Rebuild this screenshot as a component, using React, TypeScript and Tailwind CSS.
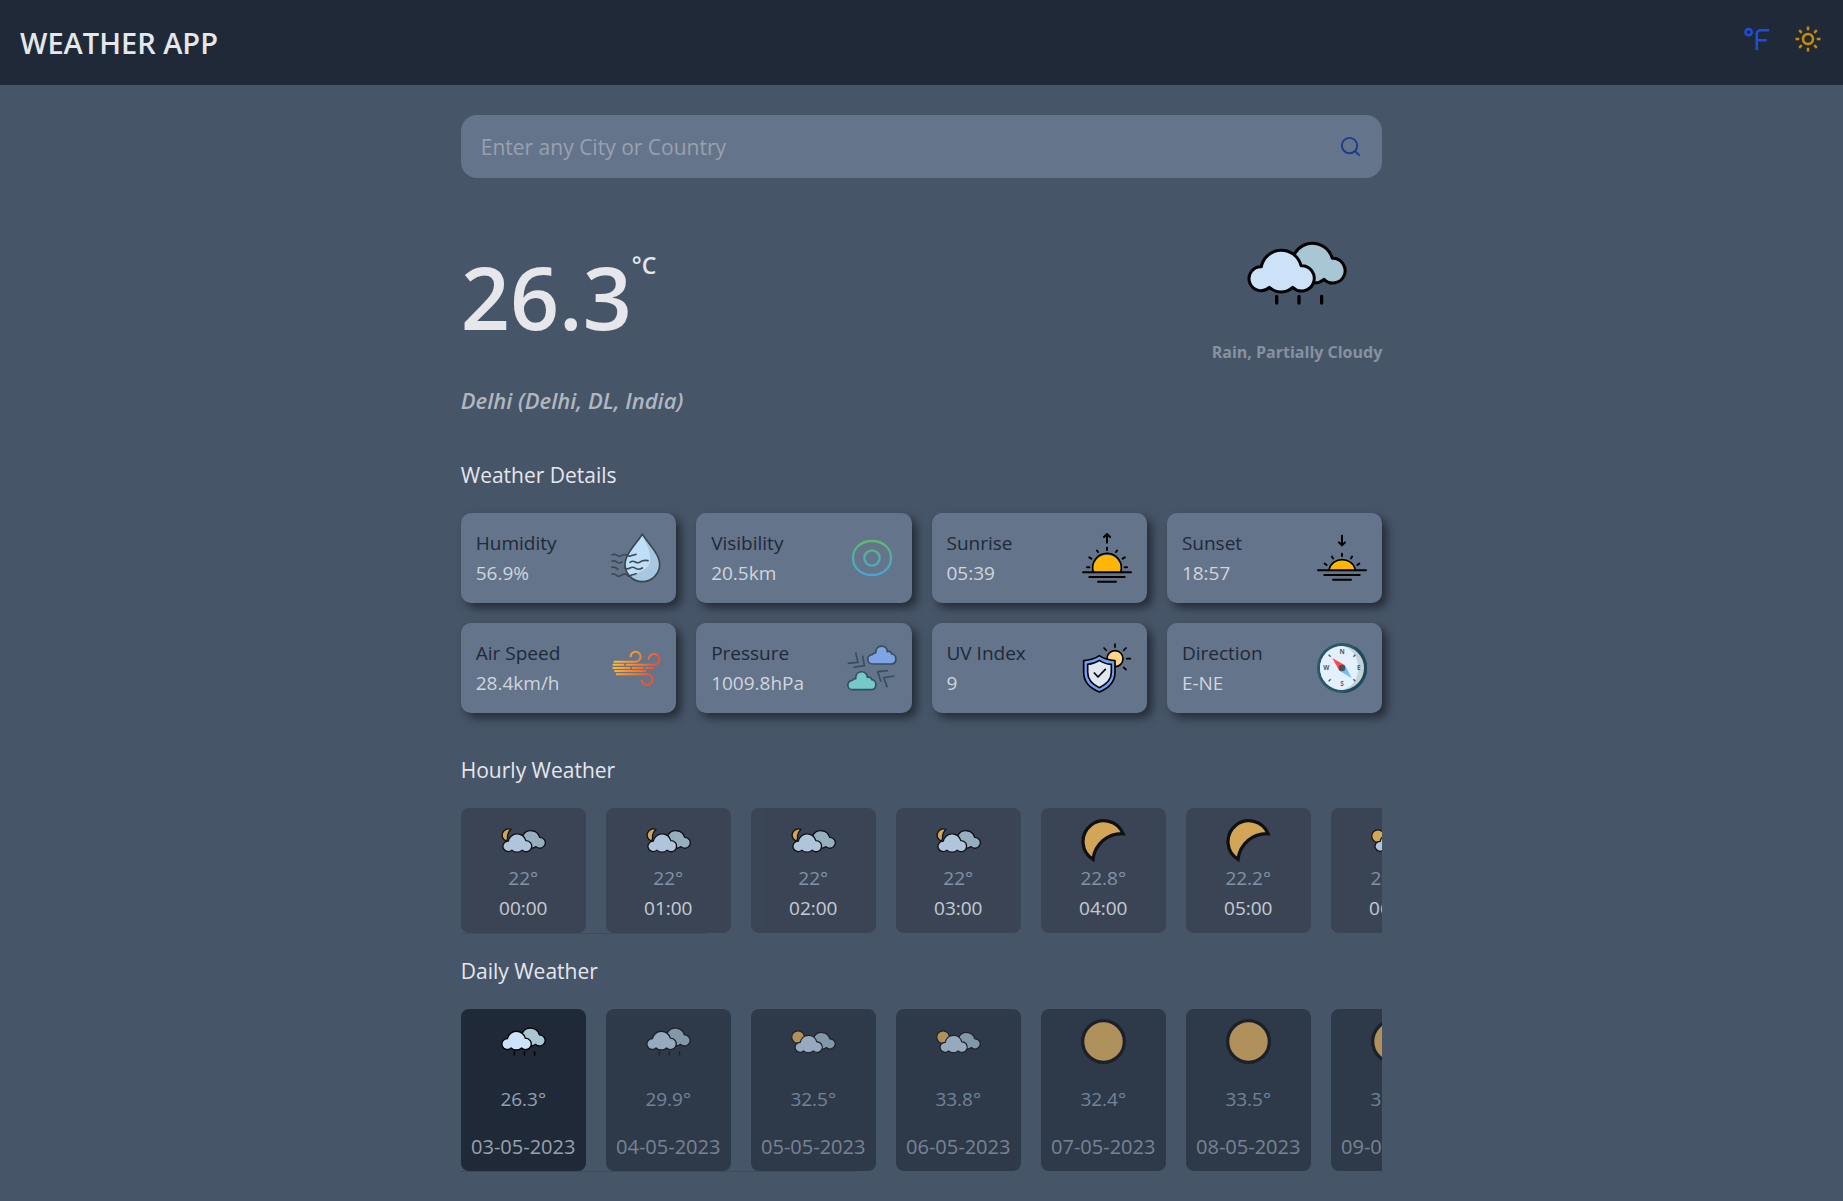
import type { ReactNode } from "react";
import { BiSun } from "react-icons/bi";
import { FiSearch } from "react-icons/fi";
import { RiFahrenheitLine } from "react-icons/ri";

const FRONT_CLOUD =
  "M98 128A36 36 0 1 0 122 190A51 51 0 0 0 192 190A38 38 0 1 0 217 125A61 61 0 0 0 98 128Z";
const BACK_CLOUD =
  "M197 90A62 62 0 0 1 311 103A37 37 0 1 1 286 166A45 45 0 0 1 258 177L180 150Z";

function Clouds({ transform }: { transform: string }) {
  return (
    <g transform={transform} stroke="#000" strokeWidth="9" strokeLinejoin="round">
      <path d={BACK_CLOUD} fill="#a9c6d4" />
      <path d={FRONT_CLOUD} fill="#cbe2f8" />
    </g>
  );
}

type Sky = "rain" | "moonCloud" | "sunCloud" | "moon" | "sun";

function SkyIcon({ kind, className }: { kind: Sky; className: string }) {
  return (
    <svg viewBox="0 0 300 300" className={className} aria-hidden="true">
      {kind === "rain" && (
        <>
          <Clouds transform="translate(-55 3)" />
          <path
            d="M89 220v20M156 220v20M224 220v20"
            stroke="#000"
            strokeWidth="10"
            strokeLinecap="round"
          />
        </>
      )}
      {kind === "moonCloud" && (
        <>
          <path
            d="M66 76A41 41 0 1 0 33 153C50 145 42 135 44 118C46 98 54 86 66 76Z"
            fill="#f7ba52"
            stroke="#000"
            strokeWidth="9"
            strokeLinejoin="round"
          />
          <Clouds transform="translate(-47 28) scale(.98)" />
        </>
      )}
      {kind === "sunCloud" && (
        <>
          <circle cx="47" cy="121" r="42" fill="#f7ba52" stroke="#000" strokeWidth="8" />
          <Clouds transform="translate(-30 36) scale(.93)" />
        </>
      )}
      {kind === "moon" && (
        <path
          d="M80 276A139 139 0 1 1 281 105A193 193 0 0 0 80 276Z"
          fill="#f7ba52"
          stroke="#000"
          strokeWidth="22"
        />
      )}
      {kind === "sun" && (
        <circle cx="150" cy="150" r="139" fill="#f7ba52" stroke="#000" strokeWidth="22" />
      )}
    </svg>
  );
}

function DetailSvg({ children }: { children: ReactNode }) {
  return (
    <svg viewBox="0 0 150 150" className="size-[50px] shrink-0" fill="none" aria-hidden="true">
      {children}
    </svg>
  );
}

const humidityIcon = (
  <DetailSvg>
    <path
      d="M94 3C80 28 42 62 42 94A52 52 0 0 0 146 94C146 62 108 28 94 3Z"
      fill="#bfdff9"
    />
    <path
      d="M94 3C104 34 118 50 118 80C118 104 90 118 56 128A52 52 0 0 0 146 94C146 62 108 28 94 3Z"
      fill="#a9c7e1"
    />
    <path
      d="M94 3C80 28 42 62 42 94A52 52 0 0 0 146 94C146 62 108 28 94 3Z"
      stroke="#37474f"
      strokeWidth="5"
      strokeLinejoin="round"
    />
    <g stroke="#3f4b53" strokeWidth="5" strokeLinecap="round">
      <path d="M3 66q8-4 15 1t15 0t15 0t15 0q7 0 12-3" />
      <path d="M3 85q8-4 14 2t16 0" />
      <path d="M57 88q8-6 16-1t16-1t22-3" />
      <path d="M3 103q10-2 18 6M40 105q9 5 17 0t17 1t20-1" />
      <path d="M3 123q8-2 14 4t16-1t15 0t14 0q6-1 13-4" />
    </g>
  </DetailSvg>
);

const visibilityIcon = (
  <DetailSvg>
    <defs>
      <linearGradient id="visibility" x1="0" y1="20" x2="0" y2="130" gradientUnits="userSpaceOnUse">
        <stop stopColor="#5fb86a" />
        <stop offset="1" stopColor="#46a5dc" />
      </linearGradient>
    </defs>
    <g stroke="url(#visibility)" strokeWidth="7">
      <path d="M75 24C110 24 132 47 132 75S110 126 75 126S18 103 18 75S40 24 75 24Z" />
      <circle cx="75" cy="75" r="23" />
    </g>
  </DetailSvg>
);

const sunriseIcon = (
  <DetailSvg>
    <path d="M34 117A42 42 0 1 1 116 117Z" fill="#ffb703" />
    <g stroke="#000" strokeWidth="6" strokeLinecap="round" strokeLinejoin="round">
      <path d="M34 117A43 43 0 1 1 116 117" strokeWidth="5" />
      <path d="M3 118H147M22 132H128M48 146H102" />
      <path d="M75 4V29M66 12L75 3L84 12M75 44V51M45 53L48 57M105 53L102 57M22 73L28 77M128 73L122 77M15 103H22M128 103H135" />
    </g>
  </DetailSvg>
);

const sunsetIcon = (
  <DetailSvg>
    <path d="M36 111C45 68 105 68 115 111Z" fill="#ffb703" />
    <g stroke="#000" strokeWidth="6" strokeLinecap="round" strokeLinejoin="round">
      <path d="M36 110C46 70 105 70 115 110" strokeWidth="5" />
      <path d="M3 112H147M22 126H128M48 140H102" />
      <path d="M75 8V36M66 28L75 37L84 28M75 62V69M45 71L48 76M105 71L102 76M23 92L29 96M127 92L121 96" />
    </g>
  </DetailSvg>
);

const airIcon = (
  <DetailSvg>
    <defs>
      <linearGradient id="wind" x1="5" y1="20" x2="125" y2="80" gradientUnits="userSpaceOnUse">
        <stop stopColor="#fbd03f" />
        <stop offset="1" stopColor="#f0532d" />
      </linearGradient>
    </defs>
    <g stroke="url(#wind)" strokeWidth="6">
      <path d="M8 56H74A15 15 0 1 0 59 43" />
      <path d="M5 65H40M45 65H126A16 16 0 1 0 113 50" />
      <path d="M5 75H58M63 75H98M103 75H130" />
      <path d="M10 84H105" />
      <path d="M15 94H106A16 16 0 1 1 92 110" />
    </g>
  </DetailSvg>
);

const pressureIcon = (
  <DetailSvg>
    <g stroke="#35505b" strokeWidth="5" strokeLinejoin="round">
      <path
        d="M77 63A14 14 0 0 1 76 35C78 31 82 30 86 30C86 2 121 4 121 26C128 24 133 27 134 33C151 34 151 63 133 63Z"
        fill="#7fa4e6"
      />
      <path
        d="M17 140A14 14 0 0 1 16 112C18 108 22 107 26 107C26 79 61 81 61 103C68 101 73 104 74 110C91 111 91 140 73 140Z"
        fill="#74caca"
      />
      <path d="M2 61L33 58L26 28M19 73L52 68L47 38M123 83L92 86L102 116M143 99L110 104L121 133" />
    </g>
  </DetailSvg>
);

const uvIcon = (
  <DetailSvg>
    <circle cx="99" cy="47" r="24" fill="#ffd688" stroke="#000" strokeWidth="5" />
    <path
      d="M52 38C66 48 82 52 99 53V88C99 118 80 136 52 147C24 136 5 118 5 88V53C22 52 38 48 52 38Z"
      fill="#6ea2f8"
      stroke="#000"
      strokeWidth="5"
      strokeLinejoin="round"
    />
    <path
      d="M52 52C62 59 74 63 88 64V88C88 110 74 124 52 134C30 124 17 110 17 88V64C30 63 42 59 52 52Z"
      fill="#e0e7f1"
      stroke="#000"
      strokeWidth="5"
      strokeLinejoin="round"
    />
    <path
      d="M37 90L48 102L70 79M99 3V13M66 15L73 22M132 15L125 22M134 47H145M132 80L125 73"
      stroke="#000"
      strokeWidth="5"
      strokeLinecap="round"
      strokeLinejoin="round"
    />
  </DetailSvg>
);

const compassIcon = (
  <DetailSvg>
    <circle cx="75" cy="75" r="75" fill="#2b5769" />
    <path d="M113 10A75 75 0 0 1 75 150C120 138 140 60 113 10Z" fill="#1f4a59" />
    <circle cx="75" cy="75" r="66" fill="#c4d3da" />
    <path d="M75 9A66 66 0 0 0 75 141C140 128 140 22 75 9Z" fill="#e4f0fd" />
    <g
      fill="#44606e"
      fontFamily="'Open Sans', sans-serif"
      fontSize="19"
      fontWeight="700"
      textAnchor="middle"
    >
      <text x="75" y="32">N</text>
      <text x="28" y="81">W</text>
      <text x="125" y="81">E</text>
      <text x="75" y="130">S</text>
    </g>
    <path
      d="M35 35L41 41M115 35L109 41M35 115L41 109M115 115L109 109"
      stroke="#44606e"
      strokeWidth="4"
    />
    <path d="M46 45L84 67L67 83Z" fill="#fb4a4f" />
    <path d="M104 105L67 83L84 67Z" fill="#6fbdfb" />
    <circle cx="75" cy="75" r="10" fill="#4a5058" />
  </DetailSvg>
);

const details: { label: string; value: string; icon: ReactNode }[] = [
  { label: "Humidity", value: "56.9%", icon: humidityIcon },
  { label: "Visibility", value: "20.5km", icon: visibilityIcon },
  { label: "Sunrise", value: "05:39", icon: sunriseIcon },
  { label: "Sunset", value: "18:57", icon: sunsetIcon },
  { label: "Air Speed", value: "28.4km/h", icon: airIcon },
  { label: "Pressure", value: "1009.8hPa", icon: pressureIcon },
  { label: "UV Index", value: "9", icon: uvIcon },
  { label: "Direction", value: "E-NE", icon: compassIcon },
];

const hours: { time: string; temp: string; sky: Sky }[] = [
  { time: "00:00", temp: "22°", sky: "moonCloud" },
  { time: "01:00", temp: "22°", sky: "moonCloud" },
  { time: "02:00", temp: "22°", sky: "moonCloud" },
  { time: "03:00", temp: "22°", sky: "moonCloud" },
  { time: "04:00", temp: "22.8°", sky: "moon" },
  { time: "05:00", temp: "22.2°", sky: "moon" },
  { time: "06:00", temp: "22.2°", sky: "sunCloud" },
];

const days: { date: string; temp: string; sky: Sky }[] = [
  { date: "03-05-2023", temp: "26.3°", sky: "rain" },
  { date: "04-05-2023", temp: "29.9°", sky: "rain" },
  { date: "05-05-2023", temp: "32.5°", sky: "sunCloud" },
  { date: "06-05-2023", temp: "33.8°", sky: "sunCloud" },
  { date: "07-05-2023", temp: "32.4°", sky: "sun" },
  { date: "08-05-2023", temp: "33.5°", sky: "sun" },
  { date: "09-05-2023", temp: "33.5°", sky: "sun" },
];

export default function App() {
  return (
    <div className="min-h-screen bg-[#475569] font-['Open_Sans','Noto_Sans',sans-serif] text-[19px] leading-[30px] text-gray-200">
      <header className="flex h-[85px] items-center justify-between bg-[#1f2937] px-5">
        <h1 className="text-[29px] font-semibold">WEATHER APP</h1>
        <div className="flex gap-5 pb-2">
          <button type="button" aria-label="Show Fahrenheit" className="text-[#1d4ed8]">
            <RiFahrenheitLine size={30} />
          </button>
          <button type="button" aria-label="Light theme" className="text-[#ca8a04]">
            <BiSun size={30} />
          </button>
        </div>
      </header>

      <main className="mx-auto w-1/2 pt-[30px]">
        <form
          className="flex h-[63px] items-center rounded-2xl bg-[#64748b] px-5"
          onSubmit={(e) => e.preventDefault()}
        >
          <input
            type="text"
            aria-label="City or country"
            placeholder="Enter any City or Country"
            className="min-w-0 flex-1 bg-transparent text-[21px] outline-none placeholder:text-gray-400"
          />
          <button type="submit" aria-label="Search" className="text-[#1e3a8a]">
            <FiSearch size={23} />
          </button>
        </form>

        <section className="mt-[45px] flex items-start justify-between">
          <div>
            <div className="flex items-start pt-[26px]">
              <span className="text-[86px] leading-[96px] font-semibold">26.3</span>
              <span className="text-[23px] leading-[32px] font-semibold">°C</span>
            </div>
            <p className="mt-[39px] text-[22px] leading-[32px] font-semibold text-[#b1b7c0] italic">
              Delhi (Delhi, DL, India)
            </p>
          </div>
          <div className="flex flex-col items-center gap-[14px]">
            <SkyIcon kind="rain" className="size-[100px]" />
            <p className="text-[16px] font-bold text-[#8791a0]">Rain, Partially Cloudy</p>
          </div>
        </section>

        <section className="mt-[43px]">
          <h2 className="text-[21px] leading-[32px]">Weather Details</h2>
          <div className="mt-[22px] grid grid-cols-4 gap-5">
            {details.map((d) => (
              <div
                key={d.label}
                className="flex items-center justify-between rounded-[10px] bg-[#64748b] p-[15px] shadow-[5px_5px_10px_rgba(0,0,0,0.5)]"
              >
                <div>
                  <p className="text-gray-800">{d.label}</p>
                  <p className="text-gray-300">{d.value}</p>
                </div>
                {d.icon}
              </div>
            ))}
          </div>
        </section>

        <section className="mt-[41px]">
          <h2 className="text-[21px] leading-[32px]">Hourly Weather</h2>
          <div className="mt-[22px] flex gap-5 overflow-hidden">
            {hours.map((h) => (
              <div
                key={h.time}
                className="flex w-[125px] shrink-0 flex-col items-center rounded-lg bg-[#374151] p-[10px] opacity-80"
              >
                <SkyIcon kind={h.sky} className="size-[45px]" />
                <p className="text-slate-400">{h.temp}</p>
                <p className="font-medium text-gray-200">{h.time}</p>
              </div>
            ))}
          </div>
          <div className="h-px w-[245px] bg-[#3f4b5d]" />
        </section>

        <section className="mt-[21px] pb-[29px]">
          <h2 className="text-[21px] leading-[32px]">Daily Weather</h2>
          <div className="mt-[22px] flex gap-5 overflow-hidden">
            {days.map((d, i) => (
              <div
                key={d.date}
                className={
                  "flex h-[162px] w-[125px] shrink-0 flex-col items-center justify-between rounded-lg bg-[#1f2937] py-[10px] " +
                  (i === 0 ? "" : "opacity-60")
                }
              >
                <SkyIcon kind={d.sky} className="size-[45px]" />
                <p className="text-slate-400">{d.temp}</p>
                <p className="text-xl text-gray-400">{d.date}</p>
              </div>
            ))}
          </div>
          <div className="h-px w-[395px] bg-[#3f4b5d]" />
        </section>
      </main>
    </div>
  );
}
